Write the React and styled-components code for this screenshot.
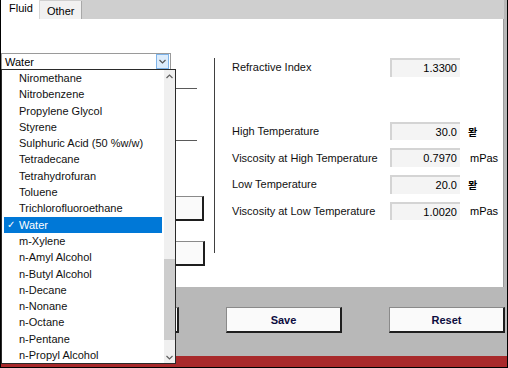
import React from "react";
import styled, { createGlobalStyle } from "styled-components";

const GlobalStyle = createGlobalStyle`
  html, body {
    margin: 0;
    padding: 0;
    background: #fff;
  }
  body {
    font-family: "Liberation Sans", Arial, sans-serif;
    font-size: 11px;
    color: #000;
  }
`;

const Window = styled.div`
  position: relative;
  width: 508px;
  height: 368px;
  box-sizing: border-box;
  border-left: 1px solid #000;
  border-right: 1px solid #000;
  border-bottom: 1px solid #000;
  background: #b8b8b8;
  display: flex;
  flex-direction: column;
  overflow: hidden;
`;

const TabStrip = styled.div`
  display: flex;
  height: 19px;
  flex-shrink: 0;
  background: #cfcfcf;
  margin-right: 3px;
`;

const Tab = styled.div`
  box-sizing: border-box;
  width: ${(p) => p.$width}px;
  padding: ${(p) => (p.$active ? "1px 0 0 8px" : "3px 0 0 7px")};
  margin-top: ${(p) => (p.$active ? 0 : 1)}px;
  background: ${(p) => (p.$active ? "#fff" : "#f1f1f1")};
  border-right: 1px solid ${(p) => (p.$active ? "#d8d8d8" : "#a8a8a8")};
  line-height: 14px;
`;

const Panel = styled.div`
  flex: 0 0 268px;
  margin-right: 3px;
  background: #fff;
  border-right: 1px solid #9c9c9c;
  display: grid;
  grid-template-columns: 213px 1px 1fr;
`;

const LeftCol = styled.div`
  display: flex;
  flex-direction: column;
  padding-top: 34px;
`;

const Combo = styled.div`
  box-sizing: border-box;
  width: 170px;
  height: 17px;
  border: 1px solid #9a9a9a;
  display: flex;
  align-items: center;
  justify-content: space-between;
  padding-left: 3px;
  background: #fff;
`;

const ComboButton = styled.div`
  box-sizing: border-box;
  width: 13px;
  height: 15px;
  margin-right: 1px;
  background: #dcecfc;
  border: 1px solid #7eb4ea;
  display: flex;
  align-items: center;
  justify-content: center;
`;

const Rule = styled.div`
  width: 120px;
  margin-left: 76px;
  margin-top: ${(p) => p.$top}px;
  border-top: 1px solid #5a5a5a;
`;

const GhostButton = styled.div`
  box-sizing: border-box;
  width: 116px;
  height: 25px;
  margin-left: ${(p) => p.$left}px;
  margin-top: ${(p) => p.$top}px;
  background: #fafafa;
  border: 1px solid #8a8a8a;
  border-right: 2px solid #1e1e1e;
  border-bottom: 2px solid #1e1e1e;
`;

const Divider = styled.div`
  margin-top: 39px;
  height: 195px;
  background: #404040;
`;

const RightCol = styled.div`
  padding: 39px 0 0 17px;
  display: flex;
  flex-direction: column;
`;

const FieldGroup = styled.div`
  display: grid;
  grid-template-columns: 158px 70px 30px;
  grid-auto-rows: 18.7px;
  row-gap: 8px;
  align-items: center;
  margin-top: ${(p) => p.$top || 0}px;
`;

const Label = styled.div`
  color: #111;
`;

const Field = styled.div`
  box-sizing: border-box;
  height: 100%;
  background: #f4f4f4;
  border-top: 2px solid #d4d4d4;
  border-left: 2px solid #d4d4d4;
  text-align: right;
  padding-right: 3px;
  line-height: 16px;
`;

const Unit = styled.div`
  padding-left: ${(p) => (p.$glyph ? 8 : 10)}px;
  font-family: ${(p) =>
    p.$glyph ? '"Noto Sans CJK KR", sans-serif' : '"Liberation Sans", Arial, sans-serif'};
  font-size: ${(p) => (p.$glyph ? 10 : 11)}px;
  font-weight: ${(p) => (p.$glyph ? 700 : 400)};
`;

const Footer = styled.div`
  flex: 0 0 69px;
  display: flex;
  gap: 47px;
  padding: 20px 0 0 62px;
  box-sizing: border-box;
`;

const ActionButton = styled.div`
  box-sizing: border-box;
  width: 116px;
  height: 26px;
  background: #fafafa;
  border: 1px solid #8a8a8a;
  border-right: 2px solid #1e1e1e;
  border-bottom: 2px solid #1e1e1e;
  display: flex;
  align-items: center;
  justify-content: center;
  font-weight: bold;
  color: #0c0c40;
`;

const RedStrip = styled.div`
  flex: 0 0 11px;
  background: #a8292b;
`;

const DropList = styled.div`
  position: absolute;
  left: 0;
  top: 69px;
  width: 175px;
  height: 295px;
  box-sizing: border-box;
  border: 1px solid #2a2a2a;
  background: #fff;
  display: flex;
`;

const Items = styled.div`
  flex: 1;
`;

const Item = styled.div`
  position: relative;
  height: 16.3px;
  line-height: 16.3px;
  margin-left: 2px;
  width: 158px;
  padding-left: 15px;
  box-sizing: border-box;
  white-space: nowrap;
  background: ${(p) => (p.$selected ? "#0078d7" : "transparent")};
  color: ${(p) => (p.$selected ? "#fff" : "#111")};
`;

const Check = styled.span`
  position: absolute;
  left: 3px;
  top: 0;
  font-family: "DejaVu Sans", sans-serif;
  font-size: 10px;
`;

const ScrollBar = styled.div`
  width: 11px;
  background: #f0f0f0;
  display: flex;
  flex-direction: column;
  align-items: center;
`;

const Arrow = styled.div`
  height: 12px;
  display: flex;
  align-items: center;
  justify-content: center;
`;

const Track = styled.div`
  flex: 1;
  width: 100%;
  display: flex;
  flex-direction: column;
  padding: 177px 0 11px;
  box-sizing: border-box;
`;

const Thumb = styled.div`
  flex: 1;
  background: #cdcdcd;
`;

const fluids = [
  "Niromethane",
  "Nitrobenzene",
  "Propylene Glycol",
  "Styrene",
  "Sulphuric Acid (50 %w/w)",
  "Tetradecane",
  "Tetrahydrofuran",
  "Toluene",
  "Trichlorofluoroethane",
  "Water",
  "m-Xylene",
  "n-Amyl Alcohol",
  "n-Butyl Alcohol",
  "n-Decane",
  "n-Nonane",
  "n-Octane",
  "n-Pentane",
  "n-Propyl Alcohol",
];

const Chevron = ({ up, color = "#606060" }) => (
  <svg width="7" height="5" viewBox="0 0 7 5">
    <path
      d={up ? "M0.5 4 L3.5 1 L6.5 4" : "M0.5 1 L3.5 4 L6.5 1"}
      fill="none"
      stroke={color}
      strokeWidth="1.2"
    />
  </svg>
);

const App = () => {
  const selected = "Water";
  return (
    <>
      <GlobalStyle />
      <Window>
        <TabStrip>
          <Tab $active $width={39}>Fluid</Tab>
          <Tab $width={42}>Other</Tab>
        </TabStrip>

        <Panel>
          <LeftCol>
            <Combo>
              <span>Water</span>
              <ComboButton>
                <Chevron color="#555" />
              </ComboButton>
            </Combo>
            <Rule $top={18} />
            <Rule $top={51} />
            <GhostButton $left={87} $top={55} />
            <GhostButton $left={88} $top={20} />
          </LeftCol>

          <Divider />

          <RightCol>
            <FieldGroup>
              <Label>Refractive Index</Label>
              <Field>1.3300</Field>
              <span />
            </FieldGroup>
            <FieldGroup $top={45}>
              <Label>High Temperature</Label>
              <Field>30.0</Field>
              <Unit $glyph>뫋</Unit>
              <Label>Viscosity at High Temperature</Label>
              <Field>0.7970</Field>
              <Unit>mPas</Unit>
              <Label>Low Temperature</Label>
              <Field>20.0</Field>
              <Unit $glyph>뫋</Unit>
              <Label>Viscosity at Low Temperature</Label>
              <Field>1.0020</Field>
              <Unit>mPas</Unit>
            </FieldGroup>
          </RightCol>
        </Panel>

        <Footer>
          <ActionButton />
          <ActionButton>Save</ActionButton>
          <ActionButton>Reset</ActionButton>
        </Footer>
        <RedStrip />

        <DropList>
          <Items>
            {fluids.map((name) => (
              <Item key={name} $selected={name === selected}>
                {name === selected && <Check>✓</Check>}
                {name}
              </Item>
            ))}
          </Items>
          <ScrollBar>
            <Arrow>
              <Chevron up />
            </Arrow>
            <Track>
              <Thumb />
            </Track>
            <Arrow>
              <Chevron />
            </Arrow>
          </ScrollBar>
        </DropList>
      </Window>
    </>
  );
};

export default App;
